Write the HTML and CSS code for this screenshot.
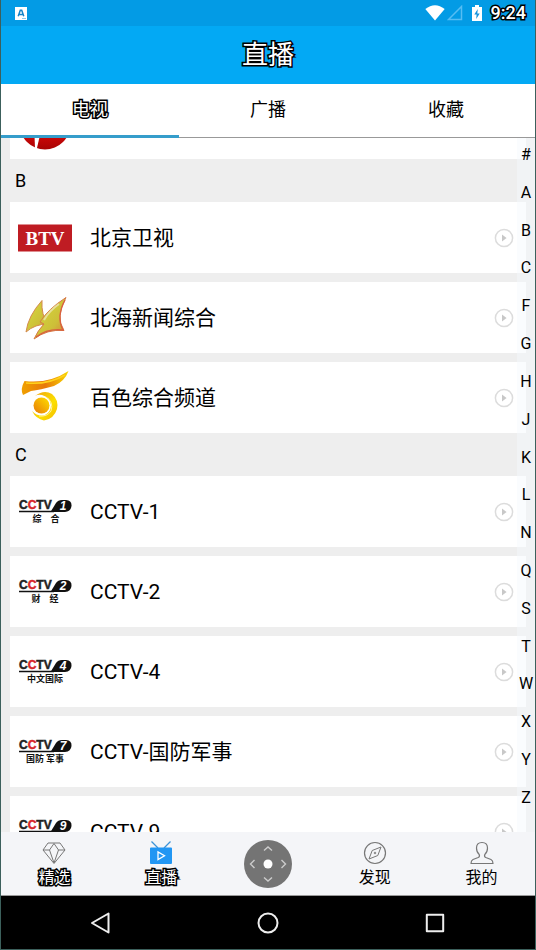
FILE: index.html
```html
<!DOCTYPE html>
<html lang="zh-CN">
<head>
<meta charset="utf-8">
<meta name="viewport" content="width=device-width, initial-scale=1">
<title>直播</title>
<link rel="stylesheet" href="styles.css">
</head>
<body>
<svg class="defs" aria-hidden="true">
  <defs>
    <linearGradient id="sail" x1="0" y1="0" x2="1" y2="1">
      <stop offset="0.3" stop-color="#d2cf3c"/><stop offset="0.65" stop-color="#cdbf38"/><stop offset="1" stop-color="#d8783c"/>
    </linearGradient>
    <linearGradient id="swoosh" x1="0" y1="0" x2="1" y2="0">
      <stop offset="0" stop-color="#f0a000"/><stop offset="0.5" stop-color="#e8780a"/><stop offset="1" stop-color="#f8d800"/>
    </linearGradient>
    <linearGradient id="ring" x1="0" y1="0" x2="1" y2="1">
      <stop offset="0" stop-color="#f0a010"/><stop offset="0.6" stop-color="#fbe000"/><stop offset="1" stop-color="#f5b800"/>
    </linearGradient>
    <linearGradient id="ball" x1="1" y1="0" x2="0" y2="1">
      <stop offset="0" stop-color="#ffe000"/><stop offset="1" stop-color="#e87a08"/>
    </linearGradient>
    <linearGradient id="globe" x1="0" y1="0" x2="0" y2="1">
      <stop offset="0.7" stop-color="#d00808"/><stop offset="1" stop-color="#a80404"/>
    </linearGradient>
    <symbol id="play" viewBox="0 0 20 20">
      <circle cx="10" cy="10" r="8.6" fill="none" stroke="#dcdcdc" stroke-width="1.5"/>
      <path d="M8 6.500v7l4.600-3.500z" fill="#c8c8c8"/>
    </symbol>
    <symbol id="cctv" viewBox="0 0 54 32">
      <text class="cctv-word" x="1" y="13"><tspan>C</tspan><tspan class="cctv-red">C</tspan><tspan>TV</tspan></text>
      <path d="M1 15.500H36" stroke="#111" stroke-width="1.400"/>
      <path d="M32.500 16 38 7Q40 4 44 4H48Q54 4.500 53.500 10T47 16Z" fill="#111"/>
    </symbol>
  </defs>
</svg>
<div class="app">
  <div class="status">
    <svg class="status-app" viewBox="0 0 12 13"><path d="M0 0h12v13H0z" fill="#fff"/><path d="M3.200 9.300 5.300 3.300h1.400l2.100 6M4 7.600h4" fill="none" stroke="#1785c8" stroke-width="1.500"/><path d="M7 11.500h4" stroke="#8ccbee"/></svg>
    <svg class="wifi" viewBox="0 0 20 16"><path d="M.3 4Q10-3.600 19.700 4L10 15.500z" fill="#fff"/></svg>
    <svg class="signal" viewBox="0 0 16 16"><path d="M14.500 1.500v13h-13z" fill="none" stroke="#56bdf3" stroke-width="1.500"/></svg>
    <svg class="battery" viewBox="0 0 10 16"><path d="M3 0h4v2h3v14H0V2h3z" fill="#fff"/><path d="M5.800 4 2.300 9.500h2.300L4.200 14l3.500-5.600H5.300z" fill="#1593dc"/></svg>
    <time class="clock outlined">9:24</time>
  </div>
  <header class="title-bar"><h1 class="title outlined">直播</h1></header>
  <div class="tabs" role="tablist">
    <button class="tab tab-active" role="tab" aria-selected="true"><span class="outlined">电视</span></button>
    <button class="tab" role="tab" aria-selected="false">广播</button>
    <button class="tab" role="tab" aria-selected="false">收藏</button>
  </div>
  <main class="content">
    <div class="channels">
      <ul class="group">
        <li class="channel">
          <svg class="logo" viewBox="0 0 54 54"><circle cx="27" cy="27" r="25.500" fill="url(#globe)"/><path d="M16 25h9l-6 26-2 .5z" fill="#fff"/></svg>
        </li>
      </ul>
      <h2 class="section">B</h2>
      <ul class="group">
        <li class="channel">
          <svg class="logo" viewBox="0 0 54 54"><path d="M0 13.500h54v27H0z" fill="#bf1c23"/><text class="btv" x="27" y="34">BTV</text></svg>
          <span class="name">北京卫视</span>
          <button class="play" aria-label="播放"><svg viewBox="0 0 20 20"><use href="#play"/></svg></button>
        </li>
        <li class="channel">
          <svg class="logo" viewBox="0 0 54 54">
            <path d="M24 9.500Q10 25 8 41 17 33 30 33 23 24 24 9.500Z" fill="url(#sail)" stroke="#d48a4c"/>
            <path d="M48 6.500Q30 18 22 31L26 33Q20 39 16 48 29 38 46 39.500 37 26 48 6.500Z" fill="url(#sail)" stroke="#d67a48"/>
            <path d="M41 13Q31 20 26 29" fill="none" stroke="#e7df9a" stroke-width="2"/>
            <path d="M47 9Q38 26 45 39Q30 37 18 46" fill="none" stroke="#d9603f" stroke-width="1.300"/>
          </svg>
          <span class="name">北海新闻综合</span>
          <button class="play" aria-label="播放"><svg viewBox="0 0 20 20"><use href="#play"/></svg></button>
        </li>
        <li class="channel">
          <svg class="logo" viewBox="0 0 54 54">
            <path d="M6.500 10Q31 13 50.500 0 47 10 36 15 22 19 13 20L5 24Q2 18 6.500 10Z" fill="url(#swoosh)"/>
            <path d="M8 12Q30 14 47 4" fill="none" stroke="#ffd21c" stroke-width="1.500"/>
            <path d="M17 25Q26 18 34 23 41 29 39 38 36 48 26 49.500 18 48 14 40 20 46 27 44 33 41 33 34 32 26 24 24 20 23 17 25Z" fill="url(#ring)"/>
            <path d="M28 26Q36 31 33 40 29 46 21 45" fill="none" stroke="#fff2a0" stroke-width="1"/>
            <circle cx="23.500" cy="34.500" r="8" fill="url(#ball)"/>
          </svg>
          <span class="name">百色综合频道</span>
          <button class="play" aria-label="播放"><svg viewBox="0 0 20 20"><use href="#play"/></svg></button>
        </li>
      </ul>
      <h2 class="section">C</h2>
      <ul class="group">
        <li class="channel">
          <svg class="logo logo-wide" viewBox="0 0 54 32"><use href="#cctv"/><text class="cctv-num" x="45" y="14">1</text><text class="cctv-sub" x="28" y="26">综　合</text></svg>
          <span class="name">CCTV-1</span>
          <button class="play" aria-label="播放"><svg viewBox="0 0 20 20"><use href="#play"/></svg></button>
        </li>
        <li class="channel">
          <svg class="logo logo-wide" viewBox="0 0 54 32"><use href="#cctv"/><text class="cctv-num" x="45" y="14">2</text><text class="cctv-sub" x="27" y="26">财　经</text></svg>
          <span class="name">CCTV-2</span>
          <button class="play" aria-label="播放"><svg viewBox="0 0 20 20"><use href="#play"/></svg></button>
        </li>
        <li class="channel">
          <svg class="logo logo-wide" viewBox="0 0 54 32"><use href="#cctv"/><text class="cctv-num" x="45" y="14">4</text><text class="cctv-sub" x="27" y="26">中文国际</text></svg>
          <span class="name">CCTV-4</span>
          <button class="play" aria-label="播放"><svg viewBox="0 0 20 20"><use href="#play"/></svg></button>
        </li>
        <li class="channel">
          <svg class="logo logo-wide" viewBox="0 0 54 32"><use href="#cctv"/><text class="cctv-num" x="45" y="14">7</text><text class="cctv-sub" x="27" y="26">国防 军事</text></svg>
          <span class="name">CCTV-国防军事</span>
          <button class="play" aria-label="播放"><svg viewBox="0 0 20 20"><use href="#play"/></svg></button>
        </li>
        <li class="channel">
          <svg class="logo logo-wide" viewBox="0 0 54 32"><use href="#cctv"/><text class="cctv-num" x="45" y="14">9</text></svg>
          <span class="name">CCTV-9</span>
          <button class="play" aria-label="播放"><svg viewBox="0 0 20 20"><use href="#play"/></svg></button>
        </li>
      </ul>
    </div>
    <nav class="index" aria-label="字母索引">
      <a href="#">#</a><a href="#">A</a><a href="#">B</a><a href="#">C</a><a href="#">F</a><a href="#">G</a><a href="#">H</a><a href="#">J</a><a href="#">K</a><a href="#">L</a><a href="#">N</a><a href="#">Q</a><a href="#">S</a><a href="#">T</a><a href="#">W</a><a href="#">X</a><a href="#">Y</a><a href="#">Z</a>
    </nav>
  </main>
  <nav class="bottom-nav">
    <button class="nav-item">
      <svg viewBox="0 0 24 24" fill="none" stroke="#777" stroke-linejoin="round"><path d="M6 2h12l5 7-11 13.500L1 9zM1 9h6.500L12 2.500 16.500 9H23M7.500 9 12 22l4.500-13"/></svg>
      <span class="outlined">精选</span>
    </button>
    <button class="nav-item">
      <svg viewBox="0 0 24 24" fill="none"><path d="M2.500.500 9 7M21.500.500 15 7" stroke="#3b93d8" stroke-width="1.300"/><path d="M2 6.500h20a1 1 0 0 1 1 1V22a1 1 0 0 1-1 1H2a1 1 0 0 1-1-1V7.500a1 1 0 0 1 1-1z" fill="#2196f3"/><path d="M9 11v7.500l6.500-3.750z" stroke="#fff" stroke-width="1.300"/></svg>
      <span class="outlined">直播</span>
    </button>
    <button class="pad" aria-label="遥控器">
      <svg viewBox="0 0 48 48" fill="none" stroke="#ccc" stroke-width="1.400"><circle cx="24" cy="24" r="24" fill="#747474" stroke="none"/><circle cx="24" cy="24" r="4.500" fill="#fff" stroke="none"/><path d="M20 10.500 24 7l4 3.500M20 37.500 24 41l4-3.500M10.500 20 6.500 24l4 4M37.500 20l4 4-4 4"/></svg>
    </button>
    <button class="nav-item">
      <svg viewBox="0 0 24 24" fill="none" stroke="#777"><circle cx="12" cy="12" r="10.500" stroke-width="1.200"/><path d="M18 6 14.800 14.500 6 18 9.200 9.500z"/><circle cx="12" cy="12" r=".8"/></svg>
      <span>发现</span>
    </button>
    <button class="nav-item">
      <svg viewBox="0 0 24 24" fill="none" stroke="#777" stroke-width="1.200" stroke-linejoin="round"><path d="M12 1.500C8.500 1.500 6.500 3.500 6.500 7c0 3 1 5 2.700 6.500.6 1.500.2 2.500-1 3L3 18.500c-1.500.7-2 1.800-2 4h22c0-2.200-.5-3.300-2-4l-5.200-2c-1.200-.5-1.600-1.500-1-3C16.500 12 17.500 10 17.500 7c0-3.500-2-5.500-5.500-5.500z"/></svg>
      <span>我的</span>
    </button>
  </nav>
  <div class="system-nav">
    <button aria-label="返回"><svg viewBox="0 0 24 24"><path d="M19.500 2.500v19L3 12z"/></svg></button>
    <button aria-label="主页"><svg viewBox="0 0 24 24"><circle cx="12" cy="12" r="9.500"/></svg></button>
    <button aria-label="最近任务"><svg viewBox="0 0 24 24"><path d="M3.800 3.800h16.400v16.400H3.800z"/></svg></button>
  </div>
</div>
</body>
</html>
```
FILE: styles.css
```css
* {
  box-sizing: border-box;
}

body {
  margin: 0;
  font-family: Roboto, "Noto Sans CJK SC", sans-serif;
  color: #000;
}

button {
  margin: 0;
  padding: 0;
  border: 0;
  background: none;
  color: inherit;
  font: inherit;
}

svg {
  display: block;
}

.defs {
  position: absolute;
  width: 0;
  height: 0;
}

.app {
  display: flex;
  flex-direction: column;
  height: 100vh;
  border: solid #3c605c;
  border-width: 0 1px 1px;
  background: #eee;
}

/* White lettering with a heavy black rim */
.outlined {
  color: #fff;
  -webkit-text-stroke: 3px #000;
  paint-order: stroke fill;
  stroke-linejoin: round;
}

.status {
  display: flex;
  align-items: center;
  height: 26px;
  padding: 0 9px 0 14px;
  background: #039be5;
}

.status-app {
  width: 12px;
  height: 13px;
}

.wifi {
  width: 20px;
  height: 16px;
  margin-left: auto;
}

.signal {
  width: 16px;
  height: 16px;
  margin-left: 2px;
}

.battery {
  width: 10px;
  height: 16px;
  margin: 0 9px;
}

.clock {
  font-size: 18px;
  font-weight: 500;
  line-height: 26px;
}

.title-bar {
  display: flex;
  align-items: center;
  justify-content: center;
  height: 58px;
  background: #03a9f4;
}

.title {
  margin: 0;
  font-size: 26px;
  font-weight: 400;
  line-height: 38px;
}

.tabs {
  display: grid;
  grid-template-columns: repeat(3, 1fr);
  height: 54px;
  border-bottom: 1px solid #999;
  background: #fff;
}

.tab {
  height: 54px;
  border-bottom: 3px solid transparent;
  font-size: 18px;
  line-height: 24px;
}

.tab-active {
  border-bottom-color: #359dcb;
}

.content {
  position: relative;
  flex: 1;
  min-height: 0;
  overflow: hidden;
}

/* The list rests scrolled part of the way through its first row */
.channels {
  margin-top: -50px;
  padding: 0 9px;
}

.group {
  display: flex;
  flex-direction: column;
  gap: 9px;
  margin: 0;
  padding: 0;
  list-style: none;
}

.channel {
  display: flex;
  align-items: center;
  height: 71px;
  padding: 0 12px 0 8px;
  background: #fff;
}

.logo {
  width: 54px;
  height: 54px;
}

.logo-wide {
  height: 32px;
}

.name {
  flex: 1;
  margin-left: 18px;
  font-size: 21px;
  line-height: 24px;
}

.play svg {
  width: 20px;
  height: 20px;
}

.section {
  height: 43px;
  margin: 0;
  padding-left: 5px;
  font-size: 18px;
  font-weight: 400;
  line-height: 44px;
}

.btv {
  fill: #fff;
  font: bold 19px "Liberation Serif", serif;
  text-anchor: middle;
}

.cctv-word {
  fill: #222;
  stroke: #222;
  stroke-width: 0.5px;
  font: bold 12px "Liberation Sans", sans-serif;
}

.cctv-red {
  fill: #d8262c;
  stroke: #d8262c;
}

.cctv-num {
  fill: #fff;
  font: italic bold 12px "Liberation Sans", sans-serif;
  text-anchor: middle;
}

.cctv-sub {
  fill: #111;
  font: bold 9px "Noto Sans CJK SC", sans-serif;
  text-anchor: middle;
}

.index {
  position: absolute;
  top: 0;
  right: 0;
  bottom: 0;
  display: flex;
  flex-direction: column;
  justify-content: space-between;
  width: 18px;
  padding: 8px 0 25px;
  background: rgb(245 248 252 / 45%);
}

.index a {
  color: #000;
  font-size: 16px;
  line-height: 18px;
  text-align: center;
  text-decoration: none;
}

.bottom-nav {
  display: grid;
  grid-template-columns: repeat(5, 1fr);
  height: 64px;
  border-bottom: 1px solid #999;
  background: #f4f5f8;
}

.nav-item {
  display: flex;
  flex-direction: column;
  align-items: center;
  padding-top: 9px;
  font-size: 16px;
  line-height: 26px;
}

.nav-item svg {
  width: 24px;
  height: 24px;
}

.pad {
  display: flex;
  align-items: center;
  justify-content: center;
}

.pad svg {
  width: 48px;
  height: 48px;
}

.system-nav {
  display: grid;
  grid-template-columns: repeat(3, 1fr);
  height: 53px;
  padding: 0 17px;
  background: #000;
}

.system-nav button {
  display: flex;
  align-items: center;
  justify-content: center;
}

.system-nav svg {
  width: 24px;
  height: 24px;
  fill: none;
  stroke: #eee;
  stroke-width: 2;
  stroke-linejoin: round;
}
```
